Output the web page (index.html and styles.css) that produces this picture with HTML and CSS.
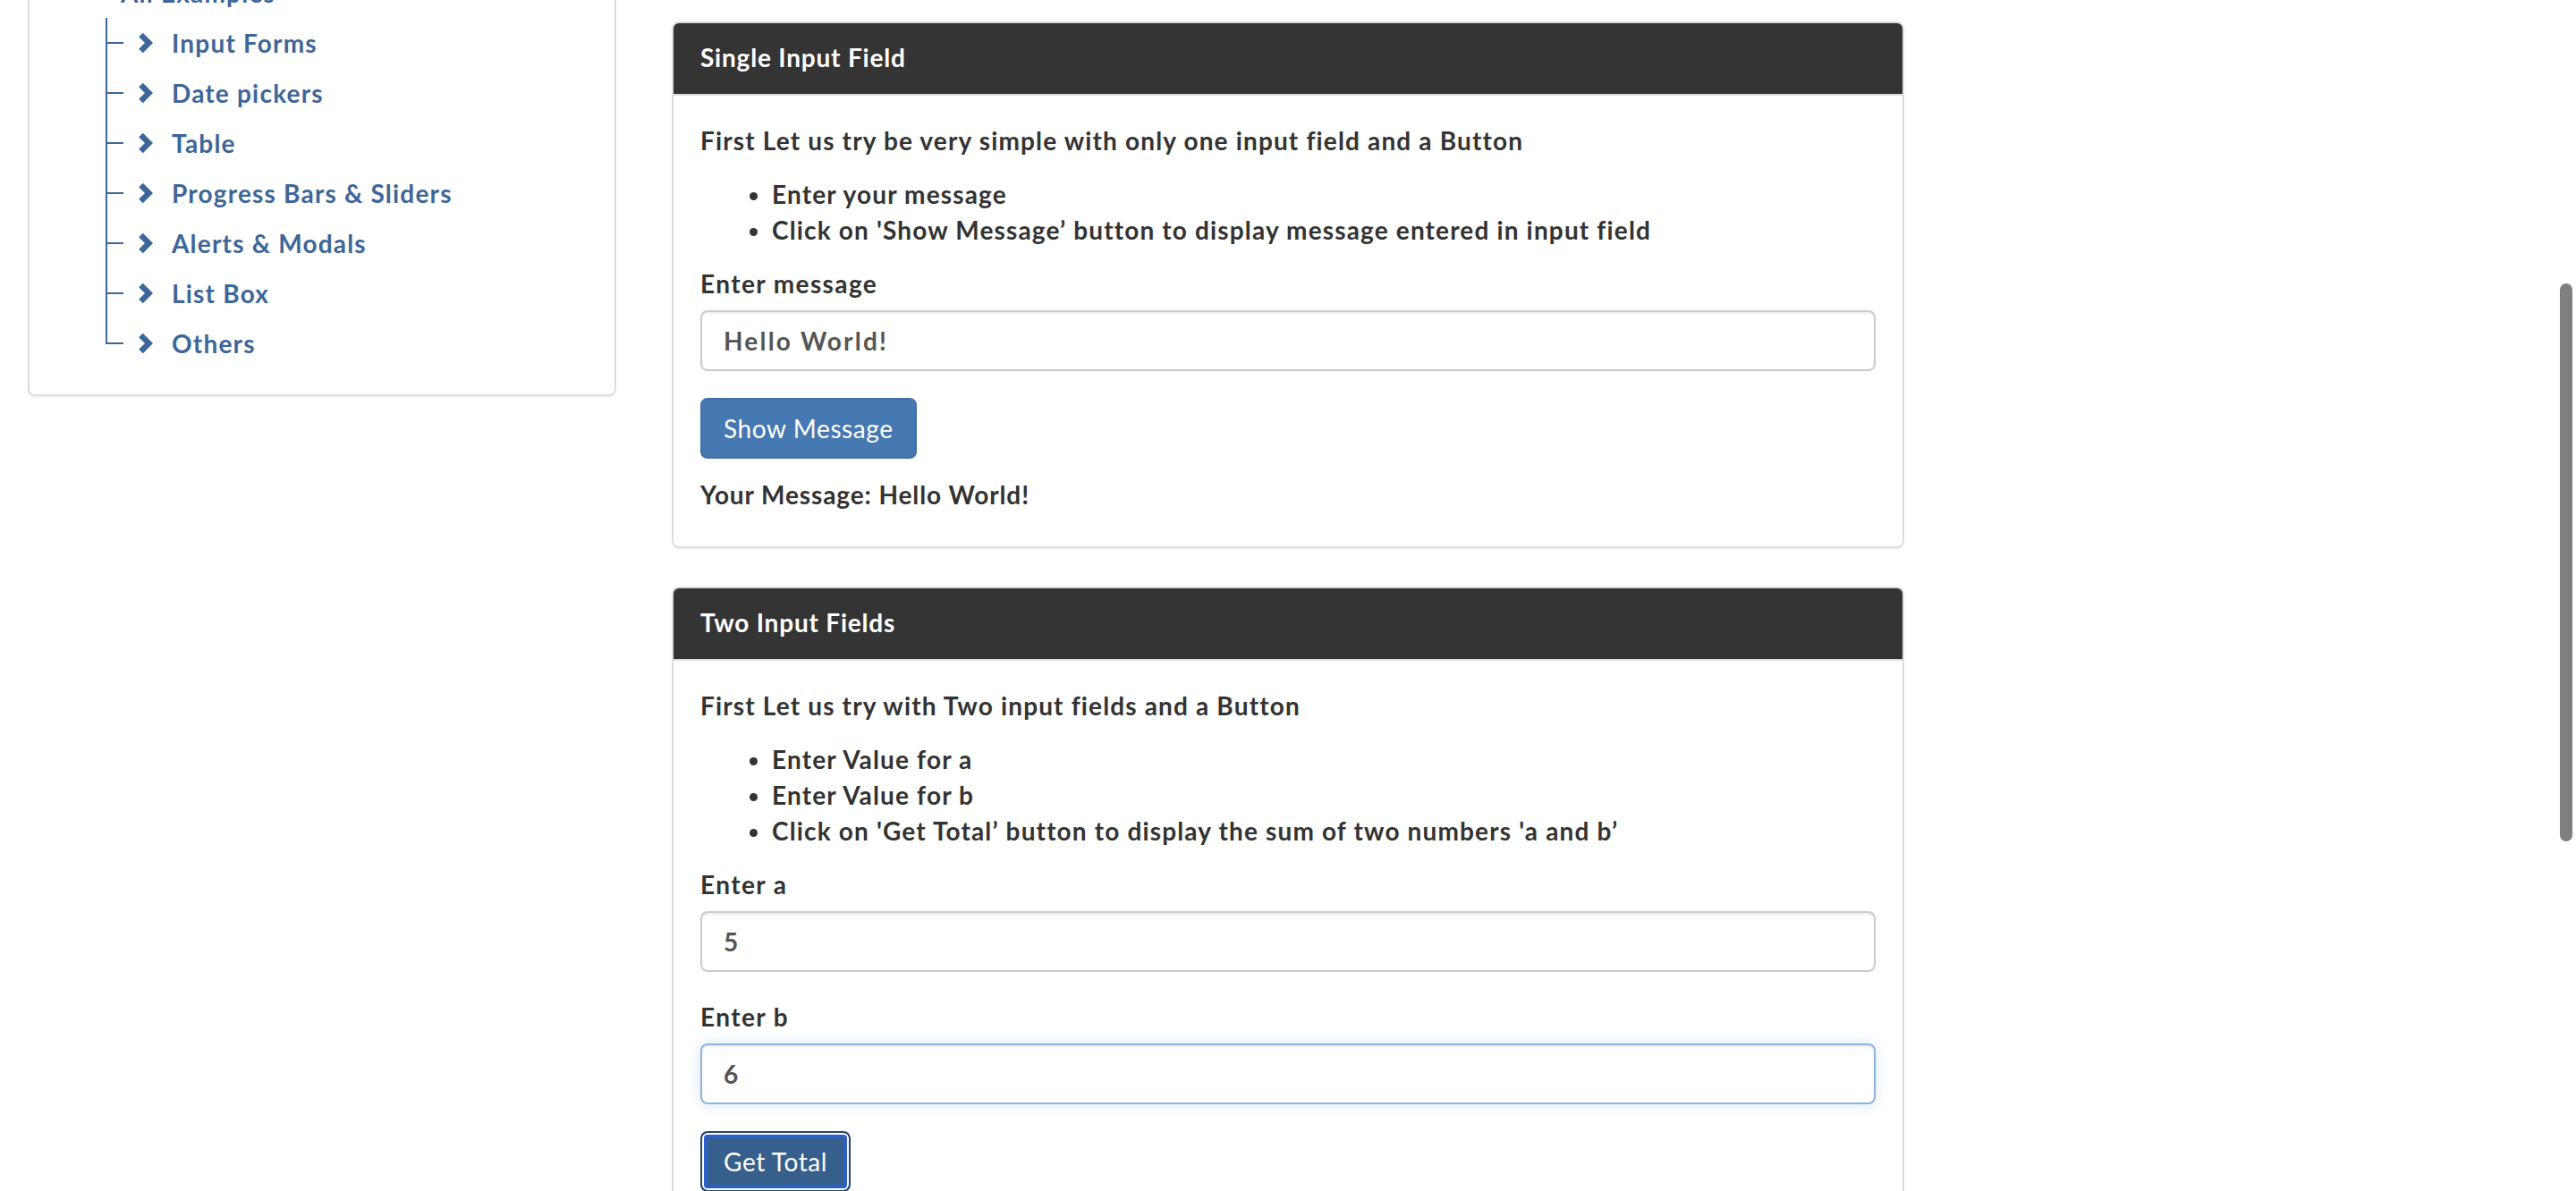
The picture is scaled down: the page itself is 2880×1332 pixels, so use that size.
FILE: index.html
```html
<!DOCTYPE html>
<html lang="en">
<head>
<meta charset="utf-8">
<title>Simple Form Demo</title>
<link rel="stylesheet" href="styles.css">
</head>
<body>
<div class="page">
  <aside class="sidebar">
    <div class="side-panel">
      <div class="tree-root">All Examples</div>
      <ul class="tree">
        <li><svg class="chev" viewBox="0 0 17 24"><polyline points="4,3 13,12 4,21"/></svg><a href="#">Input Forms</a></li>
        <li><svg class="chev" viewBox="0 0 17 24"><polyline points="4,3 13,12 4,21"/></svg><a href="#">Date pickers</a></li>
        <li><svg class="chev" viewBox="0 0 17 24"><polyline points="4,3 13,12 4,21"/></svg><a href="#">Table</a></li>
        <li><svg class="chev" viewBox="0 0 17 24"><polyline points="4,3 13,12 4,21"/></svg><a href="#">Progress Bars &amp; Sliders</a></li>
        <li><svg class="chev" viewBox="0 0 17 24"><polyline points="4,3 13,12 4,21"/></svg><a href="#">Alerts &amp; Modals</a></li>
        <li><svg class="chev" viewBox="0 0 17 24"><polyline points="4,3 13,12 4,21"/></svg><a href="#">List Box</a></li>
        <li><svg class="chev" viewBox="0 0 17 24"><polyline points="4,3 13,12 4,21"/></svg><a href="#">Others</a></li>
      </ul>
    </div>
  </aside>

  <main class="main">
    <section class="panel panel-first">
      <div class="panel-heading">Single Input Field</div>
      <div class="panel-body">
        <p class="intro">First Let us try be very simple with only one input field and a Button</p>
        <ul class="steps">
          <li>Enter your message</li>
          <li>Click on 'Show Message’ button to display message entered in input field</li>
        </ul>
        <div class="form-group">
          <label class="field-label" for="user-message">Enter message</label>
          <input class="form-control" id="user-message" type="text" value="Hello World!">
        </div>
        <button class="btn" type="button">Show Message</button>
        <div class="result">Your Message: <span>Hello World!</span></div>
      </div>
    </section>

    <section class="panel">
      <div class="panel-heading">Two Input Fields</div>
      <div class="panel-body">
        <p class="intro">First Let us try with Two input fields and a Button</p>
        <ul class="steps">
          <li>Enter Value for a</li>
          <li>Enter Value for b</li>
          <li>Click on 'Get Total’ button to display the sum of two numbers 'a and b’</li>
        </ul>
        <div class="form-group">
          <label class="field-label" for="sum1">Enter a</label>
          <input class="form-control" id="sum1" type="text" value="5">
        </div>
        <div class="form-group">
          <label class="field-label" for="sum2">Enter b</label>
          <input class="form-control is-focused" id="sum2" type="text" value="6">
        </div>
        <button class="btn btn-pressed" type="button">Get Total</button>
        <div class="result">Total a + b = <span>11</span></div>
      </div>
    </section>
  </main>
</div>
<div class="scroll-thumb"></div>
</body>
</html>
```

FILE: styles.css
```css
html {
  overflow: hidden;
}

body {
  margin: 0;
  background: #ffffff;
  color: #333333;
  font-family: Lato, "Noto Sans", sans-serif;
  font-size: 28px;
  line-height: 40px;
  font-weight: 700;
  letter-spacing: 1.15px;
}

.page {
  display: flex;
  align-items: flex-start;
  gap: 62px;
  padding-left: 31px;
}

/* ---------- sidebar ---------- */
.sidebar {
  width: 658px;
  flex: none;
}

.side-panel {
  margin-top: -100px;
  padding: 62px 30px 29px;
  border: 2px solid #dddddd;
  border-radius: 8px;
  box-shadow: 0 2px 2px rgba(0, 0, 0, 0.05);
}

.tree-root {
  height: 56px;
  line-height: 56px;
  padding-left: 72px;
  color: #3d6699;
  letter-spacing: 1.2px;
}

.tree {
  list-style: none;
  margin: 0 0 0 55px;
  padding: 0;
}

.tree li {
  display: flex;
  align-items: center;
  height: 56px;
  background: linear-gradient(#3d6699, #3d6699) 0 0 / 2px 100% no-repeat;
}

.tree li:last-child {
  background-size: 2px 29px;
}

.tree li::before {
  content: "";
  flex: none;
  width: 20px;
  height: 2px;
  margin-right: 15px;
  background: #3d6699;
}

.chev {
  flex: none;
  width: 18px;
  height: 24px;
  margin-right: 21px;
}

.chev polyline {
  fill: none;
  stroke: #3d6699;
  stroke-width: 6.5;
  stroke-linejoin: miter;
  stroke-linecap: butt;
}

.tree a {
  color: #3d6699;
  text-decoration: none;
  letter-spacing: 1.2px;
}

/* ---------- main column ---------- */
.main {
  width: 1378px;
  flex: none;
  padding-top: 24px;
}

.panel {
  border: 2px solid #dddddd;
  border-radius: 8px;
  box-shadow: 0 2px 2px rgba(0, 0, 0, 0.05);
  margin-bottom: 43px;
}

.panel-heading {
  padding: 18px 30px 21px;
  background: #343434;
  color: #ffffff;
  letter-spacing: 0.8px;
  border-bottom: 2px solid #dddddd;
  border-radius: 6px 6px 0 0;
}

.panel-body {
  padding: 30px 30px 38px;
}

.intro {
  margin: 0 0 20px;
}

.steps {
  margin: 0 0 20px;
  padding-left: 80px;
}

.form-group {
  margin-bottom: 30px;
}

.field-label {
  display: inline-block;
  margin-bottom: 10px;
  letter-spacing: 1.4px;
}

.form-control {
  display: block;
  box-sizing: border-box;
  width: 100%;
  height: 68px;
  padding: 12px 24px;
  font: inherit;
  letter-spacing: 2.2px;
  color: #555555;
  background: #ffffff;
  border: 2px solid #cccccc;
  border-radius: 8px;
  box-shadow: inset 0 2px 2px rgba(0, 0, 0, 0.075);
  outline: none;
}

.form-control.is-focused {
  border-color: #8fb4dc;
  box-shadow: inset 0 2px 2px rgba(0, 0, 0, 0.075), 0 0 14px rgba(102, 175, 233, 0.3);
}

.btn {
  display: inline-block;
  box-sizing: border-box;
  height: 68px;
  padding: 12px 24px;
  font: inherit;
  font-weight: 400;
  letter-spacing: 0.6px;
  color: #ffffff;
  background: #4678b2;
  border: 2px solid #4271a8;
  border-radius: 8px;
  cursor: pointer;
}

.btn-pressed {
  background: #365f8c;
  border-color: #23456d;
  box-shadow: inset 0 0 0 2px #ffffff, inset 0 0 0 6px #2c60c6;
}

.result {
  margin-top: 20px;
  letter-spacing: 0.9px;
}

/* overlay scrollbar thumb */
.scroll-thumb {
  position: fixed;
  left: 2862px;
  top: 317px;
  width: 14px;
  height: 624px;
  border-radius: 7px;
  background: #7f7f7f;
}
```
